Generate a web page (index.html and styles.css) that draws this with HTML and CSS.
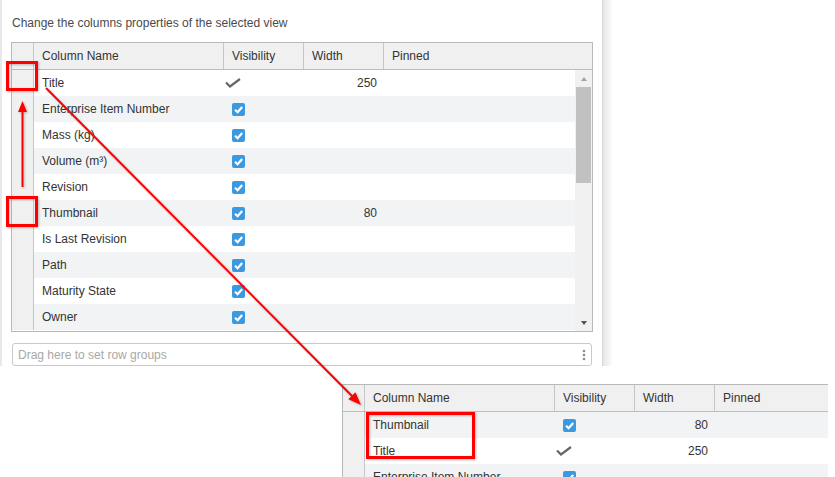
FILE: index.html
```html
<html>
<head>
  <link rel="stylesheet" href="styles.css">
</head>
<body>
  <div class="page">
    <!-- Column settings dialog (cropped) -->
    <div class="dialog-wrap">
      <div class="dialog">
        <p class="hint">Change the columns properties of the selected view</p>

        <div class="grid">
          <div class="grid-header">
            <div class="cell col-handle"></div>
            <div class="cell col-name">Column Name</div>
            <div class="cell col-vis">Visibility</div>
            <div class="cell col-width">Width</div>
            <div class="cell col-pinned">Pinned</div>
          </div>
          <div class="grid-body">
            <div class="rows">
              <div class="row">
                <div class="cell col-handle"></div>
                <div class="cell col-name">Title</div>
                <div class="cell col-vis"><svg class="mark-check" width="16" height="10" viewBox="0 0 16 10"><path d="M1 4.5 L5 8.5 L15 1" fill="none" stroke="#666" stroke-width="2.2"/></svg></div>
                <div class="cell col-width num">250</div>
                <div class="cell col-pinned"></div>
              </div>
              <div class="row">
                <div class="cell col-handle"></div>
                <div class="cell col-name">Enterprise Item Number</div>
                <div class="cell col-vis"><svg width="13" height="13" viewBox="0 0 13 13"><rect width="13" height="13" rx="2" fill="#3b99e0"/><path d="M3 6.8 L5.6 9.2 L10.2 4" fill="none" stroke="#fff" stroke-width="2.2"/></svg></div>
                <div class="cell col-width num"></div>
                <div class="cell col-pinned"></div>
              </div>
              <div class="row">
                <div class="cell col-handle"></div>
                <div class="cell col-name">Mass (kg)</div>
                <div class="cell col-vis"><svg width="13" height="13" viewBox="0 0 13 13"><rect width="13" height="13" rx="2" fill="#3b99e0"/><path d="M3 6.8 L5.6 9.2 L10.2 4" fill="none" stroke="#fff" stroke-width="2.2"/></svg></div>
                <div class="cell col-width num"></div>
                <div class="cell col-pinned"></div>
              </div>
              <div class="row">
                <div class="cell col-handle"></div>
                <div class="cell col-name">Volume (m³)</div>
                <div class="cell col-vis"><svg width="13" height="13" viewBox="0 0 13 13"><rect width="13" height="13" rx="2" fill="#3b99e0"/><path d="M3 6.8 L5.6 9.2 L10.2 4" fill="none" stroke="#fff" stroke-width="2.2"/></svg></div>
                <div class="cell col-width num"></div>
                <div class="cell col-pinned"></div>
              </div>
              <div class="row">
                <div class="cell col-handle"></div>
                <div class="cell col-name">Revision</div>
                <div class="cell col-vis"><svg width="13" height="13" viewBox="0 0 13 13"><rect width="13" height="13" rx="2" fill="#3b99e0"/><path d="M3 6.8 L5.6 9.2 L10.2 4" fill="none" stroke="#fff" stroke-width="2.2"/></svg></div>
                <div class="cell col-width num"></div>
                <div class="cell col-pinned"></div>
              </div>
              <div class="row">
                <div class="cell col-handle"></div>
                <div class="cell col-name">Thumbnail</div>
                <div class="cell col-vis"><svg width="13" height="13" viewBox="0 0 13 13"><rect width="13" height="13" rx="2" fill="#3b99e0"/><path d="M3 6.8 L5.6 9.2 L10.2 4" fill="none" stroke="#fff" stroke-width="2.2"/></svg></div>
                <div class="cell col-width num">80</div>
                <div class="cell col-pinned"></div>
              </div>
              <div class="row">
                <div class="cell col-handle"></div>
                <div class="cell col-name">Is Last Revision</div>
                <div class="cell col-vis"><svg width="13" height="13" viewBox="0 0 13 13"><rect width="13" height="13" rx="2" fill="#3b99e0"/><path d="M3 6.8 L5.6 9.2 L10.2 4" fill="none" stroke="#fff" stroke-width="2.2"/></svg></div>
                <div class="cell col-width num"></div>
                <div class="cell col-pinned"></div>
              </div>
              <div class="row">
                <div class="cell col-handle"></div>
                <div class="cell col-name">Path</div>
                <div class="cell col-vis"><svg width="13" height="13" viewBox="0 0 13 13"><rect width="13" height="13" rx="2" fill="#3b99e0"/><path d="M3 6.8 L5.6 9.2 L10.2 4" fill="none" stroke="#fff" stroke-width="2.2"/></svg></div>
                <div class="cell col-width num"></div>
                <div class="cell col-pinned"></div>
              </div>
              <div class="row">
                <div class="cell col-handle"></div>
                <div class="cell col-name">Maturity State</div>
                <div class="cell col-vis"><svg width="13" height="13" viewBox="0 0 13 13"><rect width="13" height="13" rx="2" fill="#3b99e0"/><path d="M3 6.8 L5.6 9.2 L10.2 4" fill="none" stroke="#fff" stroke-width="2.2"/></svg></div>
                <div class="cell col-width num"></div>
                <div class="cell col-pinned"></div>
              </div>
              <div class="row">
                <div class="cell col-handle"></div>
                <div class="cell col-name">Owner</div>
                <div class="cell col-vis"><svg width="13" height="13" viewBox="0 0 13 13"><rect width="13" height="13" rx="2" fill="#3b99e0"/><path d="M3 6.8 L5.6 9.2 L10.2 4" fill="none" stroke="#fff" stroke-width="2.2"/></svg></div>
                <div class="cell col-width num"></div>
                <div class="cell col-pinned"></div>
              </div>
            </div>

            <!-- fake native scrollbar -->
            <div class="scrollbar">
              <div class="scroll-btn"><span class="arrow-up"></span></div>
              <div class="scroll-thumb"></div>
              <div class="scroll-track"></div>
              <div class="scroll-btn"><span class="arrow-down"></span></div>
            </div>
          </div>
        </div>

        <div class="group-drop">
          <span>Drag here to set row groups</span>
          <svg width="4" height="12" viewBox="0 0 4 12"><circle cx="2" cy="2" r="1.3" fill="#8a8a8a"/><circle cx="2" cy="6" r="1.3" fill="#8a8a8a"/><circle cx="2" cy="10" r="1.3" fill="#8a8a8a"/></svg>
        </div>
      </div>
      <div class="dialog-edge"></div>
    </div>

    <!-- Result after reordering (cropped) -->
    <div class="grid inset">
      <div class="grid-header">
        <div class="cell col-handle"></div>
        <div class="cell col-name">Column Name</div>
        <div class="cell col-vis">Visibility</div>
        <div class="cell col-width">Width</div>
        <div class="cell col-pinned">Pinned</div>
      </div>
      <div class="row row-hover">
        <div class="cell col-handle"></div>
        <div class="cell col-name">Thumbnail</div>
        <div class="cell col-vis"><svg width="13" height="13" viewBox="0 0 13 13"><rect width="13" height="13" rx="2" fill="#3b99e0"/><path d="M3 6.8 L5.6 9.2 L10.2 4" fill="none" stroke="#fff" stroke-width="2.2"/></svg></div>
        <div class="cell col-width num">80</div>
        <div class="cell col-pinned"></div>
      </div>
      <div class="row">
        <div class="cell col-handle"></div>
        <div class="cell col-name">Title</div>
        <div class="cell col-vis"><svg class="mark-check" width="16" height="10" viewBox="0 0 16 10"><path d="M1 4.5 L5 8.5 L15 1" fill="none" stroke="#666" stroke-width="2.2"/></svg></div>
        <div class="cell col-width num">250</div>
        <div class="cell col-pinned"></div>
      </div>
      <div class="row">
        <div class="cell col-handle"></div>
        <div class="cell col-name">Enterprise Item Number</div>
        <div class="cell col-vis"><svg width="13" height="13" viewBox="0 0 13 13"><rect width="13" height="13" rx="2" fill="#3b99e0"/><path d="M3 6.8 L5.6 9.2 L10.2 4" fill="none" stroke="#fff" stroke-width="2.2"/></svg></div>
        <div class="cell col-width num"></div>
        <div class="cell col-pinned"></div>
      </div>
    </div>

    <!-- Red annotations drawn over the screenshot -->
    <svg class="annotations" width="835" height="477" viewBox="0 0 835 477">
      <rect x="7.5" y="62.5" width="29" height="27" fill="none" stroke="#f00" stroke-width="3"/>
      <rect x="7.5" y="197.5" width="29" height="28" fill="none" stroke="#f00" stroke-width="3"/>
      <line x1="22.5" y1="187" x2="22.5" y2="110" stroke="#f00" stroke-width="2"/>
      <polygon points="22.5,101 18,112 27,112" fill="#f00"/>
      <line x1="46" y1="88" x2="352" y2="396" stroke="#f00" stroke-width="2"/>
      <polygon points="361,405 348.3,399.3 355.4,392.3" fill="#f00"/>
      <rect x="367.5" y="413.5" width="106" height="44" fill="none" stroke="#f00" stroke-width="3"/>
    </svg>
  </div>
</body>
</html>
```

FILE: styles.css
```css
/* General styling */
body {
  margin: 0;
  background: #fff;
  font-family: "Liberation Sans", Arial, sans-serif;
  font-size: 12px;
  color: #333;
}

.page {
  position: relative;
  width: 835px;
  height: 477px;
  overflow: hidden;
}

/* Dialog */
.dialog-wrap {
  display: flex;
  height: 366px;
}

.dialog {
  width: 603px;
  box-sizing: border-box;
  border-left: 2px solid #e8e8e8;
  border-right: 1px solid #d6d6d6;
  padding: 16px 9px 0;
}

.dialog-edge {
  width: 9px;
  background: linear-gradient(to right, #e6e6e6, #fbfbfb);
}

.hint {
  margin: 0 0 12px 1px;
  line-height: 14px;
  color: #4a4a4a;
}

/* Grid */
.grid {
  border: 1px solid #b9b9b9;
  background: #fff;
}

.grid-header {
  display: flex;
  height: 26px;
  background: #f0f0f0;
  border-bottom: 1px solid #bdbdbd;
}

.grid-header .cell {
  border-right: 1px solid #c6c6c6;
}

.grid-header .col-pinned {
  border-right: none;
}

.cell {
  box-sizing: border-box;
  display: flex;
  align-items: center;
  padding: 0 8px;
  line-height: 14px;
  white-space: nowrap;
}

.col-handle {
  width: 22px;
  padding: 0;
  flex-shrink: 0;
}

.col-name {
  width: 190px;
  flex-shrink: 0;
}

.col-vis,
.col-width {
  width: 80px;
  flex-shrink: 0;
}

.col-pinned {
  flex: 1;
}

.num {
  justify-content: flex-end;
  padding-right: 7px;
}

.mark-check {
  margin-left: -7px;
}

.grid-body {
  display: flex;
  height: 261px;
}

.rows {
  flex: 1;
}

.row {
  display: flex;
  height: 26px;
}

.row:nth-child(even) {
  background: #f2f3f5;
}

.row .col-handle {
  background: #f0f0f0;
  border-right: 1px solid #c6c6c6;
}

.row-hover {
  background: #f7f9fb;
}

/* Scrollbar */
.scrollbar {
  width: 17px;
  display: flex;
  flex-direction: column;
  align-items: center;
  background: #f1f1f1;
}

.scroll-btn {
  height: 17px;
  width: 100%;
  display: flex;
  align-items: center;
  justify-content: center;
}

.scroll-thumb {
  width: 15px;
  height: 96px;
  background: #c1c1c1;
}

.scroll-track {
  flex: 1;
}

.arrow-up {
  border-left: 3.5px solid transparent;
  border-right: 3.5px solid transparent;
  border-bottom: 4px solid #a3a3a3;
}

.arrow-down {
  border-left: 3.5px solid transparent;
  border-right: 3.5px solid transparent;
  border-top: 4px solid #505050;
}

/* Row group drop zone */
.group-drop {
  margin: 11px 1px 0;
  height: 23px;
  box-sizing: border-box;
  border: 1px solid #c9c9c9;
  border-radius: 3px;
  padding: 0 5px;
  display: flex;
  align-items: center;
  justify-content: space-between;
  color: #a8a8a8;
}

/* Second (result) grid */
.inset {
  margin: 18px 0 0 342px;
  width: 485px;
  border-right: none;
}

/* Annotation layer */
.annotations {
  position: absolute;
  top: 0;
  left: 0;
  pointer-events: none;
  filter: drop-shadow(1px 1px 1px rgba(0, 0, 0, 0.25));
}
```
